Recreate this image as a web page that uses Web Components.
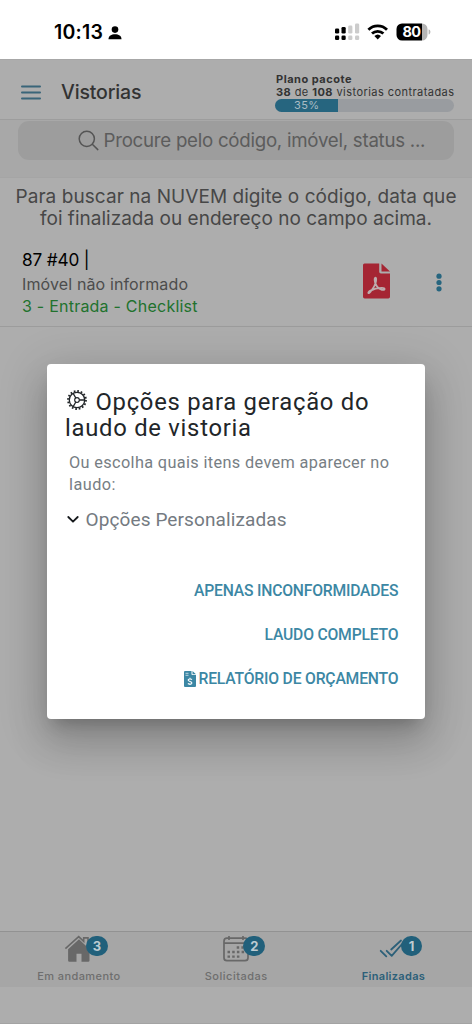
<!DOCTYPE html>
<html lang="pt-BR">
<head>
<meta charset="utf-8">
<title>Vistorias</title>
<style>
html,body{margin:0;height:100%;overflow:hidden;background:#adadad}
</style>
</head>
<body>
<vistorias-app></vistorias-app>
<script>
const define = (name, html, setup) => {
  const t = document.createElement('template');
  t.innerHTML = html;
  customElements.define(name, class extends HTMLElement {
    connectedCallback() {
      if (this.shadowRoot) return;
      this.attachShadow({mode: 'open'}).append(t.content.cloneNode(true));
      if (setup) setup(this, this.shadowRoot);
    }
  });
};

/* One line of text, tracked so that it fills the width given in "w". */
define('ui-text', `<style>
:host{display:block;white-space:pre;width:max-content}
::slotted(b){font-weight:700}
</style><slot></slot>`, el => {
  const w = parseFloat(el.getAttribute('w'));
  const natural = el.getBoundingClientRect().width;
  const n = el.textContent.length;
  if (w && n > 1) {
    const s = (w - natural) / (n - 1);
    el.style.letterSpacing = s.toFixed(3) + 'px';
    el.style.marginRight = (-s).toFixed(3) + 'px';
  }
});

define('status-bar', `<style>
:host{display:flex;box-sizing:border-box;height:59px;background:#fff;color:#000;padding:21px 41px 0 54px;justify-content:space-between;align-items:flex-start}
div{display:flex;align-items:center}
ui-text{font:600 19.5px/23px Inter,sans-serif}
.l svg{margin-left:5px}
.r{height:22px}
</style>
<div class="l"><ui-text w="49">10:13</ui-text><svg width="14" height="14" viewBox="0 0 14 14"><circle cx="7" cy="3.6" r="3.3"/><path d="M.5 13.2C.5 9.8 3.4 8.3 7 8.3s6.500 1.500 6.500 4.900z"/></svg></div>
<div class="r"><svg width="97" height="20" viewBox="334 22 97 20">
<g><rect x="335" y="28.500" width="4.200" height="5" rx="1.300"/><rect x="341.500" y="27" width="4.200" height="6.500" rx="1.300"/><rect x="335" y="35.500" width="4.200" height="4.500" rx="1.300"/><rect x="341.500" y="35.500" width="4.200" height="4.500" rx="1.300"/></g>
<g fill="#ccc"><rect x="348.200" y="25.500" width="4.200" height="8" rx="1.300"/><rect x="355" y="23.500" width="4.200" height="10" rx="1.300"/><rect x="348.200" y="35.500" width="4.200" height="4.500" rx="1.300"/><rect x="355" y="35.500" width="4.200" height="4.500" rx="1.300"/></g>
<g fill="none" stroke="#000" stroke-width="2.800"><path d="M368.400 29.700a13.200 13.200 0 0 1 18.600 0"/><path d="M372 33.600a8.200 8.200 0 0 1 11.400 0"/></g><path d="M374.400 36a4.800 4.800 0 0 1 6.600 0l-3.300 3.400z"/>
<clipPath id="c"><rect x="396.500" y="23.500" width="31" height="17" rx="5.500"/></clipPath>
<g clip-path="url(#c)"><path d="M396 23h26v18h-26z"/><path fill="#b5b5b5" d="M422 23h6v18h-6z"/></g><path fill="#b5b5b5" d="M428.600 29.300c2.400.8 2.400 4.500 0 5.300z"/>
<text x="411.700" y="37.300" text-anchor="middle" fill="#fff" font-family="Inter,sans-serif" font-weight="700" font-size="14.500" textLength="18.500">80</text>
</svg></div>`);

define('plan-meter', `<style>
:host{display:block;width:179px;font:400 11px/13px Inter,sans-serif;color:#333}
.t{height:13px;border-radius:7px;background:#999ca0;overflow:hidden}
.f{width:63px;height:13px;background:#26657f;color:#a9bcc4;display:flex;justify-content:center;line-height:13px}
ui-text{margin-left:1px}
.f ui-text{margin:0;font-size:11px}
</style>
<ui-text w="75.500" style="font-weight:700">Plano pacote</ui-text>
<ui-text w="178"><b>38</b> de <b>108</b> vistorias contratadas</ui-text>
<div class="t"><div class="f"><ui-text w="25">35%</ui-text></div></div>`);

define('app-header', `<style>
:host{display:flex;box-sizing:border-box;height:61px;border-top:1px solid #a7a7a7;border-bottom:1px solid #9d9d9d;background:#adadad;padding:0 18px 0 21px;align-items:flex-start}
svg{margin-top:25px;margin-right:20px}
ui-text{font:500 19.5px/24px Inter,sans-serif;color:#333;margin-top:20px}
plan-meter{margin:13px 0 0 auto}
</style>
<svg width="20" height="15" viewBox="0 0 20 15"><path d="M1 1.400h18M1 7.500h18M1 13.600h18" stroke="#396579" stroke-width="2" stroke-linecap="round"/></svg>
<ui-text w="80.500">Vistorias</ui-text><plan-meter></plan-meter>`);

define('search-bar', `<style>
:host{display:block;height:57px;background:#a8a8a8;padding:1px 18px 0 17.500px;box-sizing:border-box}
div{display:flex;height:39px;border-radius:11px;background:#9d9d9d;padding-left:60px;box-sizing:border-box}
svg{margin:9px 5px 0 0;flex:none}
ui-text{font:400 18.7px/24px Inter,sans-serif;color:#5c5c5c;margin-top:8px}
</style>
<div><svg width="21" height="21" viewBox="0 0 21 21" fill="none" stroke="#555" stroke-width="1.500" stroke-linecap="round"><circle cx="8.800" cy="8.800" r="7.600"/><path d="m14.300 14.300 5.500 5.300"/></svg><ui-text w="322">Procure pelo código, imóvel, status ...</ui-text></div>`);

define('cloud-hint', `<style>
:host{display:flex;flex-direction:column;align-items:center;box-sizing:border-box;height:58px;padding-top:8px;font:400 19px/22px Inter,sans-serif;color:#474747;border-top:1px solid #a5a5a5}
</style><ui-text w="441">Para buscar na NUVEM digite o código, data que</ui-text><ui-text w="392">foi finalizada ou endereço no campo acima.</ui-text>`);

define('inspection-row', `<style>
:host{display:flex;box-sizing:border-box;height:92px;border-bottom:1px solid #9c9c9c;padding:13px 29px 0 22px;font:400 16px/22px Inter,sans-serif}
.a{flex:1;color:#4c4c4c}
.a ui-text:first-child{font-size:17.200px;color:#000;line-height:24px;margin-bottom:1px}
.p{margin:15px 45px 0 0}
.d{margin-top:25px}
</style>
<div class="a"><ui-text w="67.500">87 #40 |</ui-text><ui-text w="166">Imóvel não informado</ui-text><ui-text w="175.500" style="color:#21722d">3 - Entrada - Checklist</ui-text></div>
<svg class="p" width="27" height="36" viewBox="0 0 27 36"><path fill="#a52533" d="M1.500.5h14.700v8.300q0 1.700 1.700 1.700H27v23.300q0 1.700-1.700 1.700H1.700Q0 35.500 0 33.800V2Q0 .5 1.500.5zM18.500.5 27 8.600h-8.500z"/><path fill="none" stroke="#bdabad" stroke-width="1.800" stroke-linejoin="round" stroke-linecap="round" d="M12.500 14.600c-1.500.1-.7 4.500.1 6.300 1.500 3.400 3.500 5.200 6.300 5.900 3.700.7 3.500-1.900.1-2-4.400-.1-8.200.9-11.500 2.800-3.600 2.200-2.100 4 .2.900 2.300-2.800 4.800-6.700 5.300-10.300.3-2.200.2-3.600-.5-3.600z"/></svg>
<svg class="d" width="8" height="20" viewBox="0 0 8 20" fill="#26657f"><circle cx="4" cy="3.200" r="2.600"/><circle cx="4" cy="9.500" r="2.600"/><circle cx="4" cy="15.800" r="2.600"/></svg>`);

define('tab-item', `<style>
:host{display:flex;flex-direction:column;align-items:center;flex:1;color:#6e6e6e;font:500 11px/14px Inter,sans-serif}
:host([active]){color:#2c6079;font-weight:600}
.i{position:relative;width:32px;height:30px;margin:3px 0 4px}
.b{position:absolute;left:23.500px;top:.500px;width:21.500px;height:20.500px;border-radius:11px;background:#21607b;color:#bdcbd1;display:flex;justify-content:center;font:700 13px/20.500px Inter,sans-serif}
</style>
<div class="i"><slot name="icon"></slot><div class="b"><slot name="badge"></slot></div></div><slot></slot>`);

define('tab-bar', `<style>
:host{display:flex;box-sizing:border-box;height:56px;border-top:1px solid #929292;background:#a6a6a6}
svg{display:block;width:32px;height:30px}
</style>
<tab-item><svg slot="icon" viewBox="0 0 32 30" fill="#686868"><path d="M2.400 13.700 15.700 1.600l5 4.700V2.900H25v7.400l4 3.900" fill="none" stroke="#686868" stroke-width="1.600"/><path d="m16 4.200 10.500 10v11.300q0 1.300-1.300 1.300H18.500v-8h-5v8H6.400q-1.300 0-1.300-1.300V14.300z"/></svg><span slot="badge">3</span><ui-text w="83">Em andamento</ui-text></tab-item>
<tab-item><svg slot="icon" viewBox="0 0 32 30"><rect x="4" y="3.200" width="24" height="22.500" rx="3" fill="none" stroke="#686868" stroke-width="1.700"/><path d="M4 8.100h24M9 1v4M23 1v4" stroke="#686868" stroke-width="1.700"/><path d="M16.700 12.500h9M7.500 17h19M7.500 21.600h13" stroke="#686868" stroke-width="2.400" stroke-dasharray="2.500 2.200"/></svg><span slot="badge">2</span><ui-text w="62.500">Solicitadas</ui-text></tab-item>
<tab-item active><svg slot="icon" viewBox="0 0 32 30" fill="none" stroke="#2c6079" stroke-width="1.800" stroke-linecap="round" stroke-linejoin="round"><path d="m3.700 15.800 5.600 5.500M9.700 15.800l5 5L29 4.500M14.200 14.500 24 5.500"/></svg><span slot="badge">1</span><ui-text w="63">Finalizadas</ui-text></tab-item>`);

define('dialog-action', `<style>
:host{display:flex;height:44px;justify-content:flex-end;align-items:center;font:500 15.700px/22px Roboto,sans-serif;color:#3c87a4}
</style><slot></slot>`);

define('report-dialog', `<style>
:host{display:block;box-sizing:border-box;width:378px;height:355px;background:#fff;border-radius:4px;padding:25px 26.500px 0 18px;box-shadow:0 11px 15px -7px rgba(0,0,0,.2),0 24px 38px 3px rgba(0,0,0,.14),0 9px 46px 8px rgba(0,0,0,.12);font-family:Roboto,sans-serif}
.h{display:flex;font:400 23.800px/26px Roboto,sans-serif;color:#222629}
.h svg{margin:-.500px 8px 0 .500px}
.h2{font:400 23.800px/27px Roboto,sans-serif;color:#222629}
.s{font:400 16.300px/22px Roboto,sans-serif;color:#777e84;padding:10px 0 0 4px}
.o{display:flex;height:26px;margin-top:11px;font:400 19px/26px Roboto,sans-serif;color:#747a81}
.o svg{margin:8px 6.500px 0 2px}
.a{margin-top:36px}
.a svg{margin-right:3px}
</style>
<div class="h"><svg width="22" height="22" viewBox="-11 -11 22 22" fill="none" stroke="#222629"><circle r="7.700" stroke-width="1.300"/><circle r="9" stroke-width="1.800" stroke-dasharray="1.700 1.834"/><circle r="2.300" stroke-width="1.200"/><path d="M2.300 0h5.400M-1.150-2-3.850-6.670M-1.150 2-3.850 6.670" stroke-width="1.300"/></svg><ui-text w="273">Opções para geração do</ui-text></div>
<ui-text class="h2" w="186">laudo de vistoria</ui-text>
<div class="s"><ui-text w="320">Ou escolha quais itens devem aparecer no</ui-text><ui-text w="46.500">laudo:</ui-text></div>
<div class="o"><svg width="12" height="9" viewBox="0 0 12 9"><path d="m1.300 2 4.700 4.700L10.700 2" fill="none" stroke="#16191c" stroke-width="1.800" stroke-linecap="round" stroke-linejoin="round"/></svg><ui-text w="201">Opções Personalizadas</ui-text></div>
<div class="a">
<dialog-action><ui-text w="204.500">APENAS INCONFORMIDADES</ui-text></dialog-action>
<dialog-action><ui-text w="134">LAUDO COMPLETO</ui-text></dialog-action>
<dialog-action><svg width="12" height="16" viewBox="0 0 12 16"><path fill="#3c87a4" d="M1 0h6.500v3.200q0 .8.800.8H12v11q0 1-1 1H1q-1 0-1-1V1q0-1 1-1zM8.500 0 12 3.200H8.500z"/><path d="M1.500 2.300h3M1.500 4.300h3" stroke="#c8dfe8" stroke-width=".9"/><path d="M8 8.500C7.300 7.800 4.100 7.500 4.100 9.100c0 1.700 3.800 1 3.800 2.800 0 1.600-3.200 1.400-4 .6M6 6.800v1M6 13v1" fill="none" stroke="#fff" stroke-width="1.100"/></svg><ui-text w="200">RELATÓRIO DE ORÇAMENTO</ui-text></dialog-action>
</div>`);

define('vistorias-app', `<style>
:host{display:flex;flex-direction:column;position:relative;width:472px;height:1024px;background:#adadad;overflow:hidden}
main{flex:1;min-height:0}
footer{height:36px;border-bottom:1px solid #a3a3a3}
.modal{position:absolute;inset:59px 0 0;overflow:hidden;padding:305px 0 0 47px}
report-dialog{margin-top:.4px}
</style>
<status-bar></status-bar><app-header></app-header><search-bar></search-bar>
<main><cloud-hint></cloud-hint><inspection-row></inspection-row></main>
<tab-bar></tab-bar><footer></footer>
<div class="modal"><report-dialog></report-dialog></div>`);
</script>
</body>
</html>
